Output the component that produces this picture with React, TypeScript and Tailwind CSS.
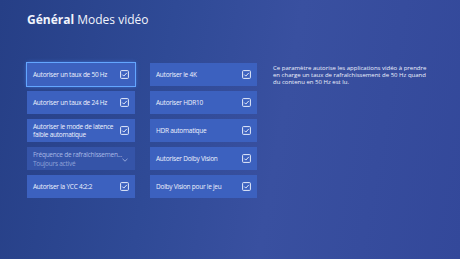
import React from 'react';

const font = { fontFamily: '"Open Sans", "Noto Sans", sans-serif' };

function CheckBox() {
  return (
    <svg width="9" height="9" viewBox="0 0 9 9" className="shrink-0">
      <rect x="0.6" y="0.6" width="7.8" height="7.8" rx="0.8" fill="none" stroke="#e6ecfb" strokeWidth="1" />
      <path d="M2.3 4.6 L3.8 6.1 L6.8 2.9" fill="none" stroke="#e6ecfb" strokeWidth="1" />
    </svg>
  );
}

function Toggle({ label, focused = false }: { label: React.ReactNode; focused?: boolean }) {
  return (
    <div
      className={`h-[23px] flex items-center justify-between pl-[6px] pr-[6px] bg-[#3c61bf] ${
        focused ? 'outline outline-[1.5px] outline-[#63a6ff] shadow-[0_0_4px_#4e8cf5]' : ''
      }`}
    >
      <span className="text-[6.5px] leading-[8px] tracking-[-0.25px] text-[#eef2fd] whitespace-nowrap">{label}</span>
      <CheckBox />
    </div>
  );
}

export default function App() {
  return (
    <div
      className="w-[460px] h-[259px] overflow-hidden bg-[linear-gradient(100deg,#263f86_0%,#2f4a96_35%,#3950a0_60%,#33489a_100%)] pl-[27px] pt-[12px]"
      style={font}
    >
      <h1 className="text-[12px] leading-[15px] text-[#f1f4fc]">
        <span className="font-bold">Général</span> Modes vidéo
      </h1>

      <div className="flex mt-[36px]">
        <div className="w-[108px] flex flex-col gap-[5px]">
          <Toggle label="Autoriser un taux de 50 Hz" focused />
          <Toggle label="Autoriser un taux de 24 Hz" />
          <Toggle label={<>Autoriser le mode de latence<br />faible automatique</>} />
          <div className="h-[23px] flex items-center justify-between pl-[6px] pr-[7px] bg-[#3554a8] overflow-hidden">
            <div className="flex flex-col whitespace-nowrap tracking-[-0.25px]">
              <span className="text-[6.5px] leading-[9px] text-[#a8b9e6]">Fréquence de rafraîchissemen...</span>
              <span className="text-[6.5px] leading-[9px] text-[#8fa3d8]">Toujours activé</span>
            </div>
            <svg width="6" height="4" viewBox="0 0 6 4" className="shrink-0 mt-[3px]">
              <path d="M0.5 0.8 L3 3.2 L5.5 0.8" fill="none" stroke="#a8b9e6" strokeWidth="0.8" />
            </svg>
          </div>
          <Toggle label="Autoriser la YCC 4:2:2" />
        </div>

        <div className="w-[107px] ml-[15px] flex flex-col gap-[5px]">
          <Toggle label="Autoriser le 4K" />
          <Toggle label="Autoriser HDR10" />
          <Toggle label="HDR automatique" />
          <Toggle label="Autoriser Dolby Vision" />
          <Toggle label="Dolby Vision pour le jeu" />
        </div>

        <p className="w-[158px] ml-[16px] mt-[2px] text-[6px] leading-[7px] text-[#eef2fd]">
          Ce paramètre autorise les applications vidéo à prendre en charge un taux de rafraîchissement de 50 Hz quand du contenu en 50 Hz est lu.
        </p>
      </div>
    </div>
  );
}
